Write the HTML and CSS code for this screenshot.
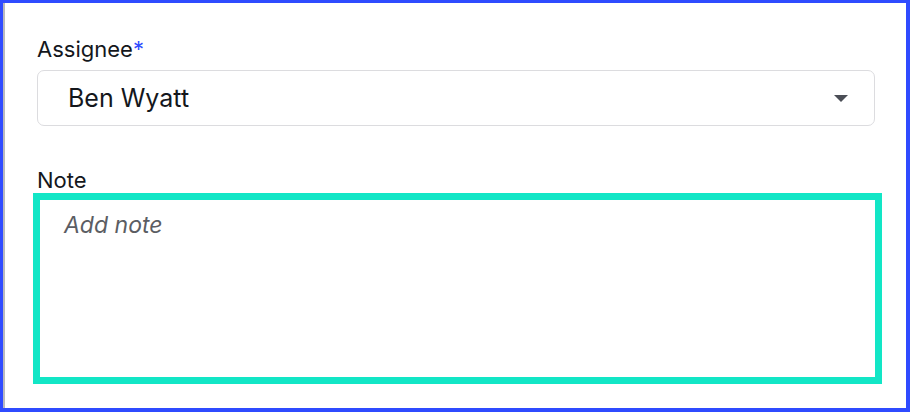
FILE: index.html
```html
<!DOCTYPE html>
<html lang="en">
<head>
<meta charset="utf-8">
<title>Assignee form</title>
<link rel="stylesheet" href="styles.css">
</head>
<body>
<div class="frame">
  <div class="form">
    <div class="field">
      <label class="label">Assignee<span class="req">*</span></label>
      <div class="select">
        <span class="value">Ben Wyatt</span>
        <svg class="caret" width="14" height="7" viewBox="0 0 14 7"><path d="M0 0H14L7 7Z" fill="#4b4e56"/></svg>
      </div>
    </div>
    <div class="field note-field">
      <label class="label" for="note">Note</label>
      <textarea id="note" class="note" placeholder="Add note"></textarea>
    </div>
  </div>
</div>
</body>
</html>
```
FILE: styles.css
```css
html, body {
  margin: 0;
  padding: 0;
  background: #ffffff;
}
body {
  font-family: Inter, "Noto Sans", sans-serif;
  color: #14171c;
}
.frame {
  box-sizing: border-box;
  width: 910px;
  height: 412px;
  border-style: solid;
  border-color: #2f4bff;
  border-width: 3px 4px 4px 3px;
  box-shadow: inset 2px 0 0 #b9b9bd;
  background: #ffffff;
}
.form {
  padding: 32px 0 0 34px;
}
.field {
  display: flex;
  flex-direction: column;
  width: 838px;
}
.label {
  font-size: 22px;
  line-height: 28px;
  color: #14171c;
}
.req {
  color: #2f4bff;
}
.select {
  box-sizing: border-box;
  margin-top: 7px;
  height: 56px;
  border: 1px solid #dcdcdf;
  border-radius: 7px;
  display: flex;
  align-items: center;
  justify-content: space-between;
  padding: 0 26px 0 30px;
}
.value {
  font-size: 25px;
  line-height: 30px;
  color: #14171c;
}
.caret {
  display: block;
  margin-top: 1px;
}
.note-field {
  margin-top: 40px;
}
.note {
  box-sizing: border-box;
  display: block;
  margin: -1px 0 0 -4px;
  width: 849px;
  height: 191px;
  border: 7px solid #12e6c6;
  border-radius: 0;
  outline: none;
  padding: 11px 24px;
  font-family: Inter, "Noto Sans", sans-serif;
  font-size: 23px;
  line-height: 29px;
  resize: none;
  background: #ffffff;
}
.note::placeholder {
  color: #5b5d63;
  font-style: italic;
  opacity: 1;
}
```
